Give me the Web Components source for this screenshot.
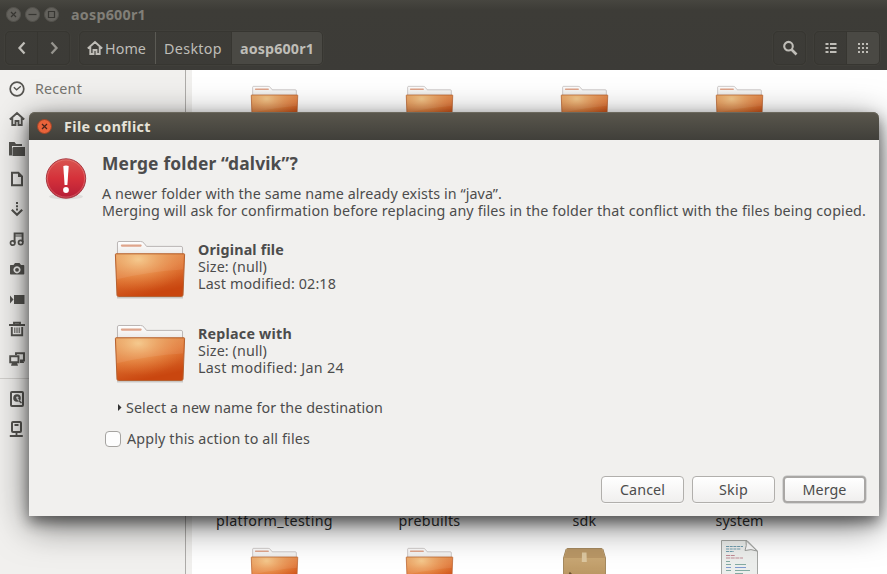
<!DOCTYPE html>
<html lang="en">
<head>
<meta charset="utf-8">
<title>aosp600r1</title>
<style>
html,body{margin:0;height:100%;overflow:hidden}
body{font:14.3px/17px "Noto Sans","Open Sans",sans-serif;color:#4c4c4c;background:#fff}
</style>
</head>
<body>
<files-window></files-window>
<script>
const define = (name, html, ready) => customElements.define(name, class extends HTMLElement {
  connectedCallback() {
    if (this.shadowRoot) return;
    const t = document.createElement('template');
    t.innerHTML = html;
    this.attachShadow({mode: 'open'}).append(t.content.cloneNode(true));
    if (ready) ready.call(this, this.shadowRoot);
  }
});

// Label whose tracking is adjusted so the line fills the width given in "w".
define('ui-text', `<style>:host{display:block;white-space:pre;height:17px;flex:none}span{display:inline-block}</style><span><slot></slot></span>`,
function (root) {
  const w = +this.getAttribute('w'), s = root.querySelector('span');
  this.style.width = w + 'px';
  const n = this.textContent.length;
  s.style.letterSpacing = ((w - s.getBoundingClientRect().width) / n) + 'px';
});

const S = 'fill="none" stroke="currentColor"';
const icons = {
  recent: `<circle cx="8" cy="8" r="6.8" ${S}/><path d="M4.8 6.2 7.6 8.8 11.8 5.2" ${S} stroke-width="1.3"/>`,
  home: `<path d="M.8 8.5 8 2l7.200 6.500M3.300 7v7h3.200v-4h3v4h3.200V7" ${S} stroke-width="1.900"/>`,
  folder: `<path d="M0 1h5.500l1.500 2h6v2H3v9.500H0z"/><path d="M4.300 6H16v9H3.500V7z"/>`,
  doc: `<path d="M3 1.800h6.300L13 5.500v8.700H3z" ${S} stroke-width="2"/><path d="M9 1v5h4.500z"/>`,
  down: `<path d="M8 1v9" ${S} stroke-width="2" stroke-dasharray="2 1.300"/><path d="M2.800 8.800 8 13.800l5.200-5" ${S} stroke-width="2.200"/>`,
  music: `<path d="M5.600 12V2.500h8V11" ${S} stroke-width="1.900"/><path d="M5 5h9" ${S} stroke-width="1"/><circle cx="3.700" cy="12" r="2.200" ${S}/><circle cx="11.700" cy="11.500" r="2.200" ${S}/>`,
  camera: `<path fill-rule="evenodd" d="M1.500 4H4.500L6 2h4.500L12 4h2.500q.8 0 .8.800v8q0 .8-.8.800H1.800q-.8 0-.8-.8v-8Q1 4 1.500 4zM8 5.200a3.600 3.600 0 1 0 .01 0z"/><circle cx="8" cy="8.800" r="1.900"/>`,
  video: `<path d="M5 4h10.500v9H5zM1 4.500l3.500 4L1 12.500z"/>`,
  trash: `<path d="M0 4h16M5 3.500V1.800h6V3.500M2.800 6v8.200h10.400V6" ${S} stroke-width="1.900"/><path d="M5.800 6.500v5.500M8 6.500v5.500M10.200 6.500v5.500" ${S} stroke-width="1"/>`,
  network: `<path d="M7 4V2.200h8V9.500h-4M1.200 5.200h8.300v6H1.200z" ${S} stroke-width="1.900"/><path d="M3 11.500h5l1 3.300H2zM11 9h3l1.200 3H11z"/>`,
  disk: `<rect x="2" y="1" width="12" height="14" rx="1" ${S} stroke-width="2"/><circle cx="8" cy="7" r="3.800"/><circle cx="8.300" cy="6.600" r="1.200" fill="#ddd"/><path d="m8 7.500 4 4" stroke="#ddd" stroke-width="1.200"/><path d="m10 9.500 2.500 2.500" stroke="currentColor" stroke-width="1.500"/>`,
  server: `<rect x="3" y="1" width="9" height="10" rx="1" ${S} stroke-width="2"/><path d="M5.500 4h4M7.500 11v4M.8 15h13" ${S} stroke-width="1.800"/>`,
  back: `<path d="M10.500 2.500 5.500 8l5 5.500" ${S} stroke-width="2.300"/>`,
  next: `<path d="M5.500 2.500l5 5.500-5 5.500" ${S} stroke-width="2.300"/>`,
  search: `<circle cx="6.500" cy="6.200" r="4.300" ${S} stroke-width="2.100"/><path d="m9.500 9.500 5 5" ${S} stroke-width="2.600"/>`,
  list: `<path d="M2.500 3h3v2h-3zM7 3h6.500v2H7zM2.500 7h3v2h-3zM7 7h6.500v2H7zM2.500 11h3v2h-3zM7 11h6.500v2H7z"/>`,
  grid: `<path d="M3 4h10.500M3 8h10.500M3 12h10.500" ${S} stroke-width="2" stroke-dasharray="2 2"/>`
};
define('ui-icon', `<style>:host{display:block;width:16px;height:16px;flex:none}svg{display:block;fill:currentColor;stroke-width:1.7;overflow:visible}</style>`,
function (root) {
  const t = document.createElement('template');
  t.innerHTML = `<svg viewBox="0 0 16 16" width="100%" height="100%">${icons[this.getAttribute('name')]}</svg>`;
  root.append(t.content);
});

define('folder-icon', `<style>:host{display:block;width:70px;height:57px}svg{display:block;width:100%;height:100%;overflow:visible}</style>
<svg viewBox="0 0 71 58" preserveAspectRatio="none"><defs>
<linearGradient id="b" x1="0" y1="0" x2=".35" y2="1"><stop offset="0" stop-color="#e29a58"/><stop offset=".5" stop-color="#df7434"/><stop offset="1" stop-color="#c9460f"/></linearGradient>
<radialGradient id="g" cx=".33" cy=".13" r=".75"><stop offset="0" stop-color="#f6cc8c" stop-opacity=".9"/><stop offset="1" stop-color="#ee8a3c" stop-opacity="0"/></radialGradient>
<linearGradient id="p" x2="0" y2="1"><stop stop-color="#fff"/><stop offset="1" stop-color="#e9e7e5"/></linearGradient></defs>
<path d="M2 57.500h67" stroke="#000" stroke-opacity=".16" stroke-width="2"/>
<path d="M2.500 15V2q0-1.500 1.500-1.500h22q2 0 3.500 1.800l2.500 3.200H67q1.500 0 1.500 1.500v8z" fill="url(#p)" stroke="#b9b4b2"/>
<path d="M7 4.700h19" stroke="#dfa58c" stroke-width="2.200" stroke-linecap="round"/>
<path d="M1 13h69q.7 0 .6.900L69 55q-.1 1.500-1.500 1.500h-64Q2 56.500 2 55L.4 13.900Q.4 13 1 13z" fill="url(#b)"/>
<path d="M1 13h69q.7 0 .6.900L69 55q-.1 1.500-1.500 1.500h-64Q2 56.500 2 55L.4 13.900Q.4 13 1 13z" fill="url(#g)" stroke="#b5602f"/>
<path d="M1.500 14h68L69 29Q35 31 2 39z" fill="#fff" fill-opacity=".08"/></svg>`);

define('package-icon', `<style>:host{display:block;width:43px;height:48px}svg{display:block}</style>
<svg width="43" height="48" viewBox="0 0 43 48"><defs><linearGradient id="a" x2="0" y2="1"><stop stop-color="#d1b17e"/><stop offset="1" stop-color="#a9834f"/></linearGradient></defs>
<path d="M5 .5h33q1.500 0 2 1L42.500 10v37H.5V10L3 1.500q.5-1 2-1z" fill="url(#a)" stroke="#a58a60"/><path d="M1 10 4 1h35l3 9z" fill="#b99766"/><path d="M19 4.500h4.500l.3 9.500h-5z" fill="#dcc7a0"/><path d="M7 25v8m-1-6 1-2 2 2" fill="none" stroke="#684f2c" stroke-width="1.400"/></svg>`);

define('script-icon', `<style>:host{display:block;width:37px;height:48px}svg{display:block}</style>
<svg width="37" height="48" viewBox="0 0 37 48"><path d="M.5.500H26L36.500 11v37H.5z" fill="#eceeec" stroke="#a4a6a3"/><path d="M25 .5q1 5-1 10 6-2 12 .500z" fill="#fafafa" stroke="#9b9d9a"/>
<g fill="none" stroke-width="1.200"><path d="M5 6.500h17M5 9h15M5 11.500h8" stroke="#6f9dae" stroke-dasharray="3 .7"/><path d="M5 15.500h9M5 18h17" stroke="#c08b96" stroke-dasharray="4 .7"/><path d="M5 21.500h4M5 24.500h5M14 24.500h11M5 30.500h5M14 30.500h15M14 33.500h8" stroke="#83aaa2"/><path d="M5 27.500h5M14 27.500h11" stroke="#7e9bd0"/></g></svg>`);

define('alert-icon', `<style>:host{display:block;width:42px;height:44px}svg{display:block;overflow:visible}</style>
<svg width="42" height="44" viewBox="0 0 42 44"><defs><linearGradient id="r" x2="0" y2="1"><stop stop-color="#d95550"/><stop offset=".5" stop-color="#d5313a"/><stop offset="1" stop-color="#b51d36"/></linearGradient></defs>
<ellipse cx="21" cy="38.500" rx="17" ry="3" fill="#000" fill-opacity=".08"/><circle cx="21" cy="20.500" r="19.700" fill="url(#r)" stroke="#a83c45"/><circle cx="21" cy="20.500" r="18.600" fill="none" stroke="#f09a94" stroke-opacity=".4"/>
<path d="M18.300 8q2.700-1 5.400 0L22.400 27h-2.800z" fill="#fff"/><circle cx="21" cy="32" r="2.900" fill="#fff"/></svg>`);

define('window-button', `<style>:host{display:block;width:15px;height:15px}svg{display:block}</style>`, function (root) {
  const kind = this.getAttribute('kind'), live = this.hasAttribute('live');
  const mark = {close: 'M5 5l5 5M10 5l-5 5', min: 'M3.500 7.500h8', max: 'M4.500 4.500h6v6h-6z'}[kind];
  const t = document.createElement('template');
  t.innerHTML = `<svg width="15" height="15" viewBox="0 0 15 15"><circle cx="7.500" cy="7.500" r="7" fill="${live ? '#e9633a' : '#64625d'}" stroke="${live ? '#9c4528' : '#55534e'}"/><path d="${mark}" fill="none" stroke="${live ? '#47231a' : '#373632'}" stroke-width="1.200"/></svg>`;
  root.append(t.content);
});

define('header-bar', `<style>
:host{display:flex;flex-direction:column;height:70px;box-sizing:border-box;background:linear-gradient(#474640,#3d3c37 10px,#3c3b37);color:#bfbdb7}
.title{display:flex;align-items:center;height:28px;padding-left:6px;gap:4px;color:#817f78;font-weight:bold}
.title ui-text{margin-left:8px}
.tools{display:flex;height:34px;padding:3px 7px 0 5px}
.group{display:flex;height:34px;box-sizing:border-box;border:1px solid #373631;border-radius:5px;box-shadow:0 0 0 1px #403f3a}
.group>*{display:flex;align-items:center;justify-content:center;box-sizing:border-box}
.group>*+*{border-left:1px solid #373631}
.on{background:#4a4944;border-radius:0 4px 4px 0;font-weight:bold}
</style>
<div class="title"><window-button kind="close"></window-button><window-button kind="min"></window-button><window-button kind="max"></window-button><ui-text w="75">aosp600r1</ui-text></div>
<div class="tools">
<div class="group" style="width:65px"><div style="width:32px"><ui-icon name="back"></ui-icon></div><div style="width:32px;color:#96948e"><ui-icon name="next"></ui-icon></div></div>
<div class="group" style="margin-left:9px;width:244px"><div style="width:75px;gap:2px;padding-right:2px"><ui-icon name="home"></ui-icon><ui-text w="41">Home</ui-text></div><div style="width:76px;border-color:#5b5a54;padding-right:1px"><ui-text w="58">Desktop</ui-text></div><div class="on" style="width:91px"><ui-text w="74">aosp600r1</ui-text></div></div>
<div class="group" style="margin-left:auto;width:33px"><div style="width:31px"><ui-icon name="search"></ui-icon></div></div>
<div class="group" style="margin-left:8px;width:66px"><div style="width:31px"><ui-icon name="list"></ui-icon></div><div class="on" style="width:33px"><ui-icon name="grid"></ui-icon></div></div>
</div>`);

define('side-item', `<style>:host{display:flex;align-items:center;height:30px;padding-left:9px;gap:10px}</style><slot></slot>`);
define('side-bar', `<style>
:host{display:block;box-sizing:border-box;width:186px;padding-top:4px;background:#f1f0ee;border-right:1px solid #aeaca9;color:#555450}
hr{border:0;border-top:1px solid #d2d0cd;margin:4px 0 5px}
</style>
<side-item><ui-icon name="recent"></ui-icon><ui-text w="47" style="color:#777570;margin-top:-2px">Recent</ui-text></side-item>
<side-item><ui-icon name="home"></ui-icon></side-item><side-item><ui-icon name="folder"></ui-icon></side-item><side-item><ui-icon name="doc"></ui-icon></side-item><side-item><ui-icon name="down"></ui-icon></side-item><side-item><ui-icon name="music"></ui-icon></side-item><side-item><ui-icon name="camera"></ui-icon></side-item><side-item><ui-icon name="video"></ui-icon></side-item><side-item><ui-icon name="trash"></ui-icon></side-item><side-item><ui-icon name="network"></ui-icon></side-item>
<hr><side-item><ui-icon name="disk"></ui-icon></side-item><side-item><ui-icon name="server"></ui-icon></side-item>`);

define('icon-view', `<style>
:host{display:grid;box-sizing:border-box;grid-template-columns:repeat(4,155px);grid-template-rows:48px 378px 36px 50px;justify-items:center;padding:16px 0 0 5px;border-left:6px solid #f1f0ee;background:#fff;color:#303030;overflow:hidden}
folder-icon{width:47px;height:40px}
.labels{display:contents}
</style>
<folder-icon></folder-icon><folder-icon></folder-icon><folder-icon></folder-icon><folder-icon></folder-icon>
<i></i><i></i><i></i><i></i>
<div class="labels"><ui-text w="117">platform_testing</ui-text><ui-text w="62">prebuilts</ui-text><ui-text w="24">sdk</ui-text><ui-text w="48">system</ui-text></div>
<folder-icon></folder-icon><folder-icon></folder-icon><package-icon></package-icon><script-icon style="margin-top:-8px"></script-icon>`);

define('push-button', `<style>
:host{display:flex;align-items:center;justify-content:center;box-sizing:border-box;width:83px;height:27px;border:1px solid #b1afac;border-radius:4px;background:linear-gradient(#fff,#f0efee);box-shadow:0 1px #fff8}
:host([default]){border:2px solid #a9a7a5;box-shadow:0 0 0 .5px #bbb}
</style><slot></slot>`);

define('file-info', `<style>:host{display:flex;gap:13px;height:58px}::slotted([slot=name]){font-weight:bold}</style><folder-icon></folder-icon><div><slot name="name"></slot><slot></slot></div>`);

define('conflict-dialog', `<style>
:host{display:flex;flex-direction:column;box-sizing:border-box;width:850px;height:404px;background:#f1f0ee;border-radius:7px 7px 0 0;box-shadow:0 6px 14px rgba(0,0,0,.45),0 9px 36px rgba(0,0,0,.55)}
header{display:flex;align-items:center;gap:12px;height:28px;padding:1px 0 0 8px;box-sizing:border-box;border-radius:6px 6px 0 0;background:linear-gradient(#5a574d,#403f3a);box-shadow:inset 0 1px #6b685d;color:#e6e3d8;font-weight:bold}
main{display:grid;grid-template-columns:57px 1fr;padding:15px 13px 0 16px}
alert-icon{margin-top:3px}
h1{font-size:17.4px;line-height:17px;margin:0 0 13px}
.files{display:flex;flex-direction:column;gap:26px;padding:22px 0 0 13px}
.expand{display:flex;align-items:center;gap:4px;margin:16px 0 0 16px}
.apply{display:flex;align-items:center;gap:6px;margin:14px 0 0 3px}
.box{width:14px;height:14px;border:1px solid #a5a3a0;border-radius:4px;background:#fdfdfd}
footer{display:flex;justify-content:flex-end;gap:8px;margin-top:auto;padding:0 13px 13px 0}
</style>
<header><window-button kind="close" live></window-button><ui-text w="87">File conflict</ui-text></header>
<main><alert-icon></alert-icon><div class="body">
<h1><ui-text w="196">Merge folder “dalvik”?</ui-text></h1>
<ui-text w="400">A newer folder with the same name already exists in “java”.</ui-text>
<ui-text w="764">Merging will ask for confirmation before replacing any files in the folder that conflict with the files being copied.</ui-text>
<div class="files">
<file-info><ui-text slot="name" w="86">Original file</ui-text><ui-text w="69">Size: (null)</ui-text><ui-text w="138">Last modified: 02:18</ui-text></file-info>
<file-info><ui-text slot="name" w="94">Replace with</ui-text><ui-text w="69">Size: (null)</ui-text><ui-text w="146">Last modified: Jan 24</ui-text></file-info></div>
<div class="expand"><svg width="4" height="7"><path d="M0 0l3.500 3.500L0 7z" fill="#333"/></svg><ui-text w="257">Select a new name for the destination</ui-text></div>
<div class="apply"><span class="box"></span><ui-text w="183">Apply this action to all files</ui-text></div>
</div></main>
<footer><push-button><ui-text w="45">Cancel</ui-text></push-button><push-button><ui-text w="29">Skip</ui-text></push-button><push-button default><ui-text w="44">Merge</ui-text></push-button></footer>`);

define('files-window', `<style>
:host{display:grid;grid-template:70px 1fr/186px 1fr;width:887px;height:574px;position:relative;overflow:hidden}
header-bar{grid-column:1/3;z-index:2}
conflict-dialog{position:absolute;left:29px;top:112px;z-index:1}
</style><header-bar></header-bar><side-bar></side-bar><icon-view></icon-view><conflict-dialog></conflict-dialog>`);
</script>
</body>
</html>
